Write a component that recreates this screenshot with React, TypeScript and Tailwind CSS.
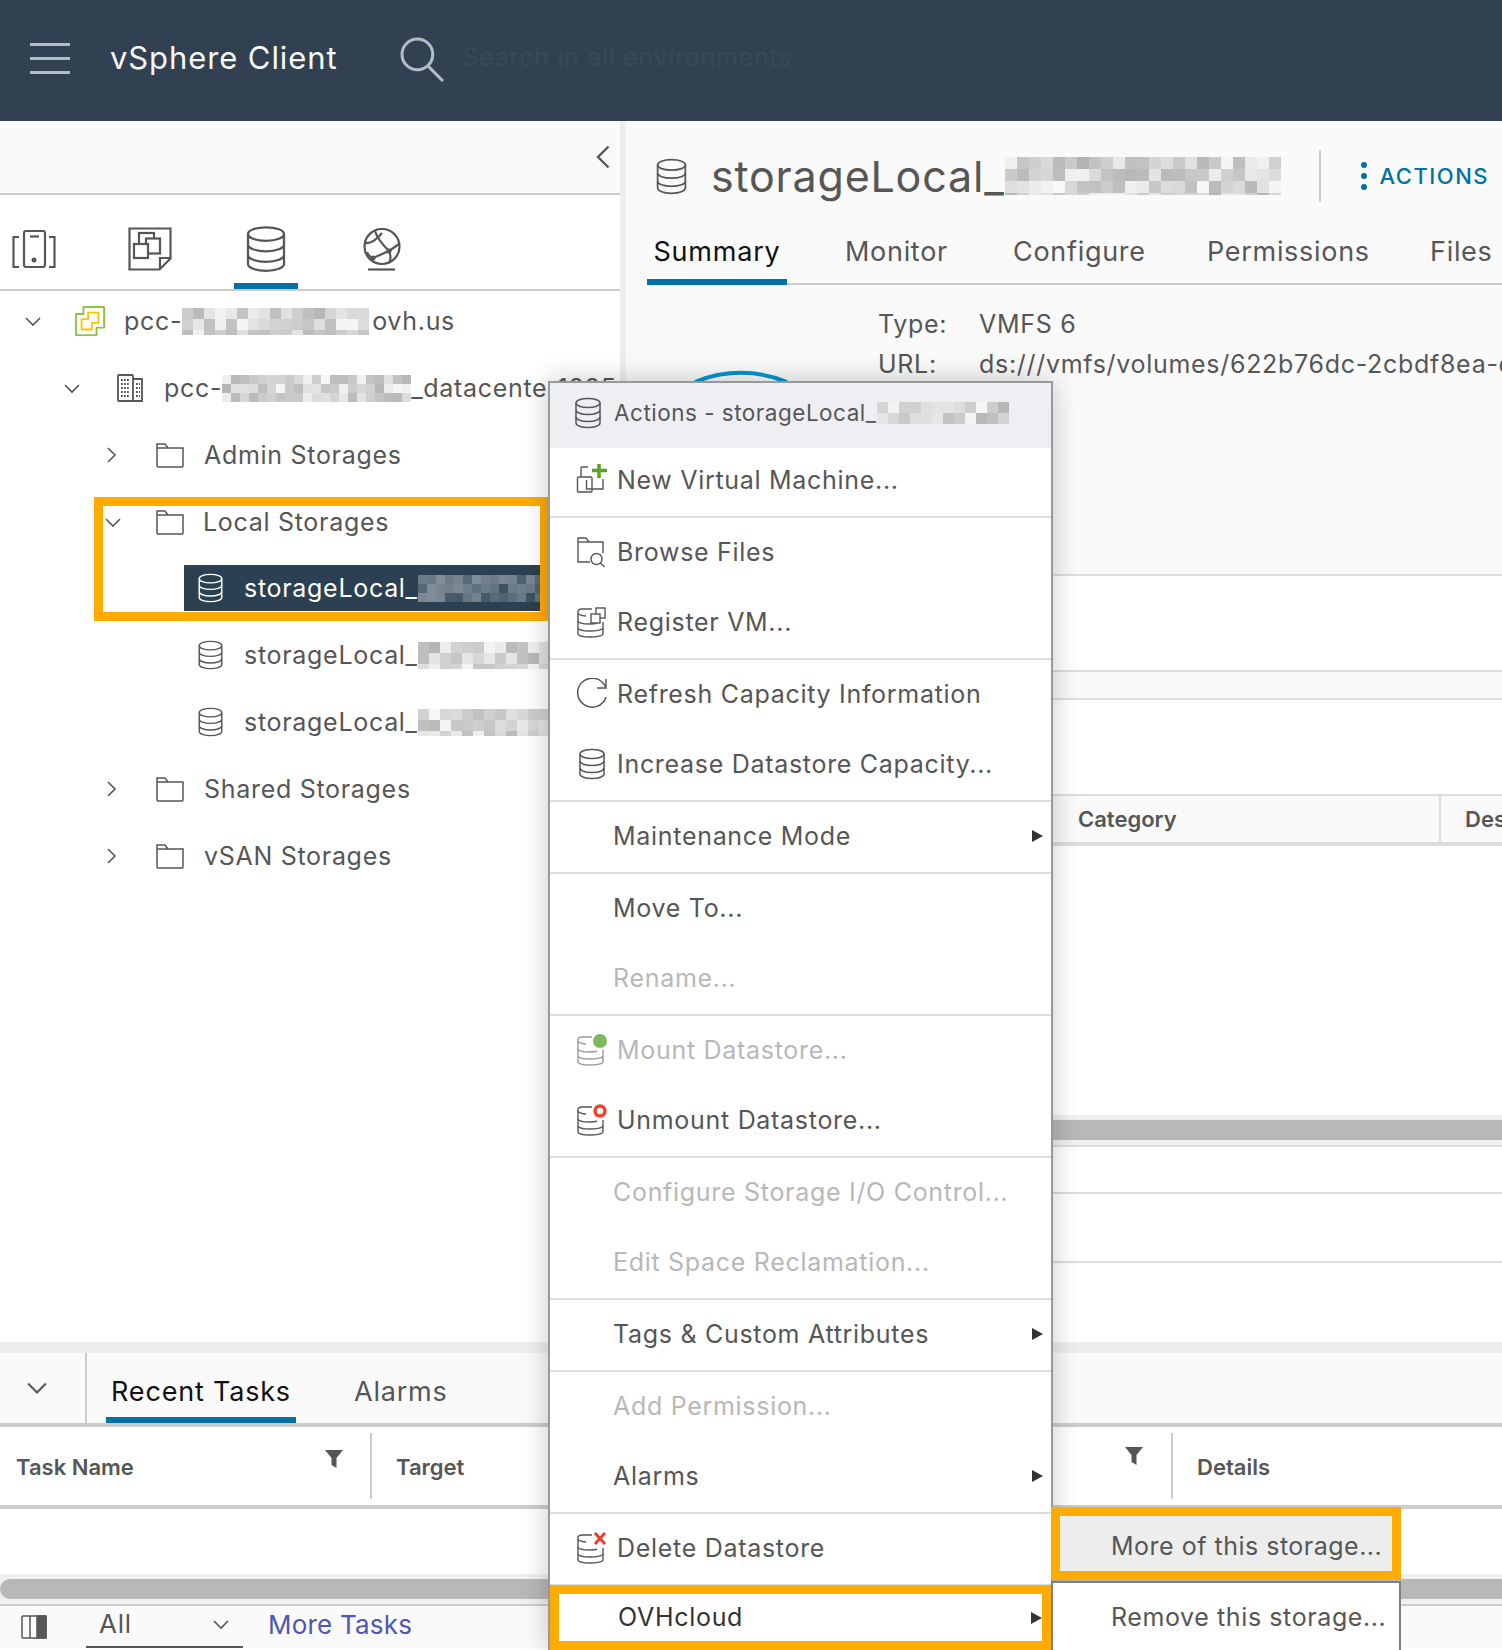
import type { ReactNode } from "react";

const stroke = "#565656";

// pixelated patch standing in for the blurred-out names
function Mosaic({ w, h, cell, seed, dark = false }: { w: number; h: number; cell: number; seed: number; dark?: boolean }) {
  const cols = Math.ceil(w / cell);
  const rows = Math.ceil(h / cell);
  let s = seed;
  const cells = [];
  for (let i = 0; i < cols * rows; i++) {
    s = (s * 9301 + 49297) % 233280;
    const r = s / 233280;
    const v = Math.round(248 - 68 * r);
    const color = dark ? `rgb(${60 + r * 70},${82 + r * 60},${98 + r * 55})` : `rgb(${v},${v},${v})`;
    cells.push(<span key={i} className="block" style={{ width: cell, height: cell, backgroundColor: color }} />);
  }
  return (
    <span className="flex flex-wrap overflow-hidden shrink-0" style={{ width: w, height: h }}>
      {cells}
    </span>
  );
}

function Chevron({ dir, className }: { dir: "down" | "right" | "left"; className?: string }) {
  const points = { down: "1,2 8,9 15,2", right: "5,1 12,8 5,15", left: "11,1 4,8 11,15" }[dir];
  const vb = dir === "down" ? "0 0 16 11" : "0 0 16 16";
  return (
    <svg viewBox={vb} className={className} fill="none" stroke={stroke} strokeWidth="1.6">
      <polyline points={points} />
    </svg>
  );
}

function Db({ className, color = stroke }: { className?: string; color?: string }) {
  return (
    <svg viewBox="0 0 28 32" className={className} fill="none" stroke={color} strokeWidth="1.5">
      <path d="M2 6c0-2.5 5-4.5 12-4.5S26 3.5 26 6v20c0 2.5-5 4.5-12 4.5S2 28.500 2 26z" />
      <path d="M2 6c0 2.500 5 4.500 12 4.500S26 8.500 26 6" />
      <path d="M2 13c0 2.500 5 4.500 12 4.500S26 15.500 26 13" />
      <path d="M2 20c0 2.500 5 4.500 12 4.500S26 22.500 26 20" />
    </svg>
  );
}

function Folder({ className }: { className?: string }) {
  return (
    <svg viewBox="0 0 28 26" className={className} fill="none" stroke={stroke} strokeWidth="1.5">
      <path d="M1 24V2h8l3 4h15v18a1 1 0 0 1-1 1H2a1 1 0 0 1-1-1z" />
      <path d="M1 6h11" />
    </svg>
  );
}

// database with notched corner, shared by the mount / unmount / delete items
function DbSmall({ color = stroke, children }: { color?: string; children?: ReactNode }) {
  return (
    <svg viewBox="0 0 32 32" className="w-[32px] h-[32px]" fill="none" stroke={color} strokeWidth="1.4">
      <path d="M16 3H6C3 3 2 4.500 2 6v22c0 1.500 5 3 12 3s13-1.500 13-3V16" />
      <path d="M2 7c0 1.500 3 2.500 8 3" />
      <path d="M2 15c0 1.500 4 3 12 3 3 0 5-.3 7-.8" />
      <path d="M2 22c0 1.500 5 3 12 3s13-1.500 13-3" />
      {children}
    </svg>
  );
}

function NewVmIcon() {
  return (
    <svg viewBox="0 0 32 32" className="w-[32px] h-[32px]" fill="none" stroke={stroke} strokeWidth="1.4">
      <path d="M5 13V4a1 1 0 0 1 1-1h6" />
      <rect x="1.500" y="13" width="14.500" height="15" rx="1" />
      <path d="M27 15v10H16M10.500 16v9H16" />
      <path d="M23 0v14M16 6.500h15" stroke="#5aa220" strokeWidth="3.500" />
    </svg>
  );
}

function BrowseIcon() {
  return (
    <svg viewBox="0 0 32 32" className="w-[32px] h-[32px]" fill="none" stroke={stroke} strokeWidth="1.4">
      <path d="M14 26H2V2h8l3 4h14v11" />
      <path d="M2 6h11" />
      <circle cx="20.500" cy="23" r="5.500" />
      <path d="M24.500 27l4 4" />
    </svg>
  );
}

function RegisterIcon() {
  return (
    <DbSmall>
      <rect x="20" y="2" width="9" height="10" fill="#fff" />
      <rect x="15" y="8" width="9" height="9" fill="#fff" />
    </DbSmall>
  );
}

function RefreshIcon() {
  return (
    <svg viewBox="0 0 32 32" className="w-[32px] h-[32px]" fill="none" stroke={stroke} strokeWidth="1.5">
      <path d="M29.500 9A14.500 14.500 0 1 0 30 19" />
      <path d="M30 1v9h-9" />
    </svg>
  );
}

function HostsIcon() {
  return (
    <svg viewBox="0 0 44 38" className="w-[44px] h-[38px]" fill="none" stroke={stroke} strokeWidth="2.2">
      <rect x="12" y="1" width="21" height="36" rx="2" />
      <path d="M18 6.500h9" />
      <circle cx="22" cy="30" r="2.500" fill={stroke} stroke="none" />
      <path d="M7 7H1.500v30H7M37 7h5.500v30H37" />
    </svg>
  );
}

function VmsIcon() {
  return (
    <svg viewBox="0 0 44 44" className="w-[44px] h-[44px]" fill="none" stroke={stroke} strokeWidth="2.2">
      <path d="M1.500 1.500h41v30L31.500 42.500H1.500z" />
      <path d="M42 31H32v11" />
      <rect x="11" y="6" width="15" height="12" />
      <rect x="18" y="11.500" width="14" height="15" fill="#fff" />
      <rect x="6" y="17" width="14" height="14" fill="#fff" />
    </svg>
  );
}

function GlobeIcon() {
  return (
    <svg viewBox="0 0 38 44" className="w-[38px] h-[44px]" fill="none" stroke={stroke} strokeWidth="2.2">
      <circle cx="19" cy="18.500" r="17.500" />
      <path d="M12 3c2 7 8 14 14 20l10-7" />
      <path d="M2 15c6 1 12-4 17-10" />
      <path d="M10 30l16-7c2 5 2 9 0 12" />
      <path d="M10 30c-3-1-5-3-6-6" />
      <circle cx="10" cy="30" r="2.500" fill={stroke} stroke="none" />
      <circle cx="26" cy="23" r="2.500" fill={stroke} stroke="none" />
      <path d="M5 41.500h27" />
    </svg>
  );
}

function Filter() {
  return (
    <svg viewBox="0 0 18 18" className="w-[18px] h-[18px]" fill={stroke}>
      <path d="M0 0h18l-6.500 8v10l-5-3V8z" />
    </svg>
  );
}

function VCenterIcon() {
  return (
    <svg viewBox="-1 -1 32 32" className="w-[30px] h-[30px]" fill="none" strokeWidth="2" strokeLinejoin="round">
      <path d="M8 7.500V0h22v22h-8v8H0V7.500z" stroke="#8cc63f" />
      <path d="M13 13V6h11v11h-7v7H6V13z" stroke="#fac400" />
    </svg>
  );
}

function DatacenterIcon() {
  return (
    <svg viewBox="0 0 26 28" className="w-[26px] h-[28px]" fill="none" stroke={stroke} strokeWidth="1.8">
      <rect x="1" y="1" width="15" height="26" rx="1" />
      <path d="M16 5h9v22h-9" />
      <path d="M4 6h9M4 10h9M4 14h9M4 18h9M4 22h9M19 10h4M19 14h4M19 18h4M19 22h4" strokeWidth="2" strokeDasharray="1.800 1.200" />
    </svg>
  );
}

type Item = { label: string; icon?: ReactNode; disabled?: boolean; arrow?: boolean };

const groups: Item[][] = [
  [{ label: "New Virtual Machine...", icon: <NewVmIcon /> }],
  [
    { label: "Browse Files", icon: <BrowseIcon /> },
    { label: "Register VM...", icon: <RegisterIcon /> },
  ],
  [
    { label: "Refresh Capacity Information", icon: <RefreshIcon /> },
    { label: "Increase Datastore Capacity...", icon: <Db className="w-[28px] h-[32px] ml-[2px]" /> },
  ],
  [{ label: "Maintenance Mode", arrow: true }],
  [{ label: "Move To..." }, { label: "Rename...", disabled: true }],
  [
    {
      label: "Mount Datastore...",
      disabled: true,
      icon: (
        <DbSmall color="#9a9a9a">
          <circle cx="24" cy="7" r="7" fill="#7fb85a" stroke="none" />
        </DbSmall>
      ),
    },
    {
      label: "Unmount Datastore...",
      icon: (
        <DbSmall>
          <circle cx="24" cy="7" r="5" fill="#fff" stroke="#f0442c" strokeWidth="3.500" />
        </DbSmall>
      ),
    },
  ],
  [
    { label: "Configure Storage I/O Control...", disabled: true },
    { label: "Edit Space Reclamation...", disabled: true },
  ],
  [{ label: "Tags & Custom Attributes", arrow: true }],
  [{ label: "Add Permission...", disabled: true }, { label: "Alarms", arrow: true }],
  [
    {
      label: "Delete Datastore",
      icon: (
        <DbSmall>
          <path d="M19 1l10 11M29 1L19 12" stroke="#e8402a" strokeWidth="3" />
        </DbSmall>
      ),
    },
  ],
];

function Arrow({ className = "mr-[8px]" }: { className?: string }) {
  return <span className={`ml-auto w-0 h-0 border-y-[6px] border-y-transparent border-l-[11px] border-l-[#333] ${className}`} />;
}

function MenuRow({ item }: { item: Item }) {
  return (
    <div className={`flex items-center h-[70px] pb-[2px] ${item.icon ? "pl-[26px]" : "pl-[63px]"}`}>
      {item.icon && <span className="w-[32px] mr-[9px] flex">{item.icon}</span>}
      <span className={item.disabled ? "text-[#b8b8b8]" : "text-[#565656]"}>{item.label}</span>
      {item.arrow && <Arrow />}
    </div>
  );
}

export default function App() {
  return (
    <div className="relative w-[1502px] h-[1650px] overflow-hidden bg-white font-[Inter,sans-serif] text-[25px] tracking-[0.7px] leading-none text-[#565656]">
      {/* Top bar */}
      <header className="flex items-center h-[121px] bg-[#314151] pb-[6px]">
        <div className="ml-[30px] w-[40px] flex flex-col gap-[11px] mt-[2px]">
          <span className="block h-[3px] bg-[#b5bcc3]" />
          <span className="block h-[3px] bg-[#b5bcc3]" />
          <span className="block h-[3px] bg-[#b5bcc3]" />
        </div>
        <span className="ml-[40px] text-[31px] tracking-[0.9px] text-[#f6f8f9]">vSphere Client</span>
        <svg viewBox="0 0 44 44" className="ml-[63px] mt-[3px] w-[45px] h-[45px]" fill="none" stroke="#b5bcc3" strokeWidth="3">
          <circle cx="17" cy="17" r="15" />
          <path d="M28 29l14 14" />
        </svg>
        <span className="ml-[17px] text-[#394958]">Search in all environments</span>
      </header>

      <div className="flex h-[1221px]">
        {/* Inventory tree */}
        <aside className="w-[620px] shrink-0 overflow-hidden">
          <div className="flex items-center justify-end h-[72px] bg-[#fafafa] border-b-2 border-[#ccc] pr-[4px] box-content">
            <Chevron dir="left" className="w-[24px] h-[24px]" />
          </div>
          <div className="flex items-center h-[96px] pl-[12px] border-b-2 border-[#ccc] box-border">
            <span className="mt-[14px]">
              <HostsIcon />
            </span>
            <span className="ml-[72px] mt-[14px]">
              <VmsIcon />
            </span>
            <span className="ml-[62px] w-[64px] h-full flex items-center justify-center border-b-[6px] border-[#0072a3] pt-[19px]">
              <Db className="w-[42px] h-[48px]" />
            </span>
            <span className="ml-[65px] mt-[16px]">
              <GlobeIcon />
            </span>
          </div>

          <div className="whitespace-nowrap">
            <div className="flex items-center h-[60px] mb-[7px] pl-[25px]">
              <Chevron dir="down" className="w-[16px] h-[11px]" />
              <span className="ml-[34px]">
                <VCenterIcon />
              </span>
              <span className="ml-[19px]">pcc-</span>
              <Mosaic w={190} h={27} cell={11} seed={11} />
              <span>ovh.us</span>
            </div>
            <div className="flex items-center h-[60px] mb-[7px] pl-[64px]">
              <Chevron dir="down" className="w-[16px] h-[11px]" />
              <span className="ml-[37px]">
                <DatacenterIcon />
              </span>
              <span className="ml-[21px]">pcc-</span>
              <Mosaic w={189} h={27} cell={9} seed={23} />
              <span>_datacenter1885</span>
            </div>
            <div className="flex items-center h-[60px] mb-[7px] pl-[103px]">
              <Chevron dir="right" className="w-[16px] h-[16px]" />
              <Folder className="ml-[37px] w-[28px] h-[26px]" />
              <span className="ml-[20px]">Admin Storages</span>
            </div>
            <div className="flex items-center h-[60px] mb-[6px] pl-[105px]">
              <Chevron dir="down" className="w-[16px] h-[11px]" />
              <Folder className="ml-[35px] w-[28px] h-[26px]" />
              <span className="ml-[19px]">Local Storages</span>
            </div>
            <div className="flex items-center h-[60px] mb-[7px] pl-[184px]">
              <div className="flex items-center h-[46px] w-full bg-[#2b4050] pl-[13px] text-white">
                <Db className="w-[27px] h-[30px]" color="#fff" />
                <span className="ml-[20px]">storageLocal_</span>
                <Mosaic w={135} h={27} cell={9} seed={37} dark />
              </div>
            </div>
            <div className="flex items-center h-[60px] mb-[7px] pl-[197px]">
              <Db className="w-[27px] h-[30px]" />
              <span className="ml-[20px]">storageLocal_</span>
              <Mosaic w={143} h={27} cell={11} seed={41} />
            </div>
            <div className="flex items-center h-[60px] mb-[7px] pl-[197px]">
              <Db className="w-[27px] h-[30px]" />
              <span className="ml-[20px]">storageLocal_</span>
              <Mosaic w={143} h={27} cell={11} seed={59} />
            </div>
            <div className="flex items-center h-[60px] mb-[7px] pl-[103px]">
              <Chevron dir="right" className="w-[16px] h-[16px]" />
              <Folder className="ml-[37px] w-[28px] h-[26px]" />
              <span className="ml-[20px]">Shared Storages</span>
            </div>
            <div className="flex items-center h-[60px] mb-[7px] pl-[103px]">
              <Chevron dir="right" className="w-[16px] h-[16px]" />
              <Folder className="ml-[37px] w-[28px] h-[26px]" />
              <span className="ml-[20px]">vSAN Storages</span>
            </div>
          </div>
        </aside>

        <div className="w-[6px] shrink-0 bg-[#eeeeee]" />

        {/* Datastore detail */}
        <main className="flex-1 min-w-0 overflow-hidden bg-[#fafafa] whitespace-nowrap">
          <div className="flex items-center h-[110px] pl-[29px]">
            <Db className="w-[33px] h-[37px] shrink-0" />
            <span className="ml-[23px] text-[43px] tracking-[0.8px]">storageLocal_</span>
            <Mosaic w={281} h={38} cell={12} seed={73} />
            <span className="ml-[33px] w-[2px] h-[52px] bg-[#ccc] shrink-0" />
            <span className="ml-[40px] flex flex-col gap-[5px]">
              <span className="block w-[6px] h-[6px] rounded-full bg-[#0072a3]" />
              <span className="block w-[6px] h-[6px] rounded-full bg-[#0072a3]" />
              <span className="block w-[6px] h-[6px] rounded-full bg-[#0072a3]" />
            </span>
            <span className="ml-[13px] text-[22px] font-medium tracking-[1.500px] text-[#0072a3]">ACTIONS</span>
          </div>
          <div className="flex h-[54px] ml-[21px] border-b-2 border-[#ccc]">
            <span className="w-[140px] h-[54px] flex justify-center pt-[7px] border-b-[6px] border-[#0072a3] text-[#111] text-[27px] tracking-[0.8px]">Summary</span>
            <div className="flex pl-[58px] pt-[7px] text-[27px] tracking-[0.7px]">
              <span className="w-[168px]">Monitor</span>
              <span className="w-[194px]">Configure</span>
              <span className="w-[223px]">Permissions</span>
              <span>Files</span>
            </div>
          </div>
          <div className="flex h-[289px] pl-[67px]">
            <svg viewBox="0 0 96 12" className="w-[96px] h-[12px] mt-[85px] shrink-0" fill="none" stroke="#0095d3" strokeWidth="4">
              <path d="M2 12A120 120 0 0 1 94 12" />
            </svg>
            <div className="ml-[89px] pt-[27px]">
              <div className="flex h-[24px] items-center">
                <span className="w-[101px] shrink-0">Type:</span>
                <span>VMFS 6</span>
              </div>
              <div className="flex h-[24px] items-center mt-[16px]">
                <span className="w-[101px] shrink-0">URL:</span>
                <span>ds:///vmfs/volumes/622b76dc-2cbdf8ea-e89b-0015</span>
              </div>
            </div>
          </div>
          <div className="h-[98px] bg-white border-t-2 border-[#ddd] border-b-2" />
          <div className="h-[26px]" />
          <div className="h-[98px] bg-white border-y-2 border-[#ddd]" />
          <div className="flex items-center h-[50px] bg-[#fafafa] border-b-4 border-[#ddd] font-semibold text-[22px] tracking-normal pl-[452px]">
            <span className="w-[361px] shrink-0">Category</span>
            <span className="flex items-center h-full border-l-2 border-[#ddd] pl-[24px]">Description</span>
          </div>
          <div className="h-[269px] bg-white" />
          <div className="flex items-center h-[32px] bg-[#f0f0f0] border-b-2 border-[#ddd]">
            <div className="w-full h-[20px] bg-[#b8b8b8]" />
          </div>
          <div className="h-[47px] bg-white border-b-2 border-[#ddd]" />
          <div className="h-[69px] bg-white border-b-2 border-[#ddd]" />
          <div className="h-[79px] bg-white" />
        </main>
      </div>

      {/* Recent tasks */}
      <div className="h-[11px] bg-[#eeeeee]" />
      <section className="whitespace-nowrap">
        <div className="flex h-[74px] bg-[#fafafa] border-b-4 border-[#ccc] text-[27px] tracking-[0.8px]">
          <div className="flex items-center justify-center w-[85px] h-[70px] border-r-2 border-[#ccc] box-content pr-0">
            <Chevron dir="down" className="w-[22px] h-[14px] mr-[12px]" />
          </div>
          <span className="ml-[19px] w-[190px] h-[70px] flex justify-center pt-[25px] border-b-[6px] border-[#0072a3] text-[#111]">Recent Tasks</span>
          <span className="ml-[58px] pt-[25px]">Alarms</span>
        </div>
        <div className="flex items-center h-[78px] border-b-4 border-[#ccc] box-content font-semibold text-[22px] tracking-normal">
          <div className="flex justify-between w-[370px] pl-[16px] pr-[27px]">
            <span className="mt-[2px]">Task Name</span>
            <span className="-mt-[4px]">
              <Filter />
            </span>
          </div>
          <div className="flex justify-between items-center w-[801px] h-[66px] border-l-2 border-[#ccc] pl-[24px] pr-[28px]">
            <span className="mt-[2px]">Target</span>
            <span className="-mt-[21px]">
              <Filter />
            </span>
          </div>
          <div className="flex items-center h-[66px] border-l-2 border-[#ccc] pl-[24px]">
            <span className="mt-[2px]">Details</span>
          </div>
        </div>
        <div className="h-[65px]" />
        <div className="flex items-center h-[32px] bg-[#f0f0f0] border-b-2 border-[#ccc]">
          <div className="w-full h-[20px] rounded-l-[10px] bg-[#b8b8b8]" />
        </div>
        <div className="flex items-center h-[42px] bg-[#fafafa] text-[26px]">
          <svg viewBox="0 0 26 24" className="ml-[21px] w-[26px] h-[24px]" fill="none" stroke={stroke} strokeWidth="1.500">
            <rect x="1" y="1" width="24" height="22" rx="1" />
            <path d="M9 1v22" />
            <rect x="16" y="1" width="9" height="22" fill={stroke} />
          </svg>
          <div className="flex items-center ml-[39px] w-[157px] h-full border-b-2 border-[#565656] pl-[13px] pr-[14px] justify-between">
            <span className="-mt-[4px]">All</span>
            <Chevron dir="down" className="w-[16px] h-[11px] -mt-[4px]" />
          </div>
          <span className="ml-[25px] -mt-[4px] tracking-[0.2px] text-[#4f56b5]">More Tasks</span>
        </div>
      </section>

      {/* Callout around the selected folder */}
      <div className="absolute left-[94px] top-[497px] w-[455px] h-[124px] border-[9px] border-[#ffab00] z-10" />

      {/* Actions menu */}
      <div className="absolute left-[548px] top-[381px] w-[505px] h-[1269px] bg-white border-2 border-[#999] border-b-0 shadow-[0_0_26px_rgba(0,0,0,0.22)] whitespace-nowrap z-20">
        <div className="flex items-center h-[65px] -mb-[2px] bg-[#eeeff3] pl-[24px] pb-[5px] text-[22.500px] tracking-[0.5px]">
          <Db className="w-[28px] h-[32px]" />
          <span className="ml-[12px]">Actions - storageLocal_</span>
          <Mosaic w={142} h={22} cell={11} seed={83} />
        </div>
        {groups.map((group, i) => (
          <div key={i} className="border-b-2 border-[#ddd] box-content">
            {group.map((item) => (
              <MenuRow key={item.label} item={item} />
            ))}
          </div>
        ))}
        <div className="flex items-center h-[65px] border-[9px] border-[#ffab00] pl-[59px] text-[#333] -mt-[1px]">
          <span>OVHcloud</span>
          <Arrow className="mr-0" />
        </div>
      </div>

      {/* OVHcloud submenu */}
      <div className="absolute left-[1051px] top-[1507px] w-[350px] h-[143px] whitespace-nowrap z-30">
        <div className="flex items-center h-[73px] bg-[#ededed] border-[9px] border-[#ffab00] pl-[51px] pt-[5px] tracking-[0.5px]">More of this storage...</div>
        <div className="flex items-center h-[70px] bg-white mt-[1px] border-t-2 border-x-2 border-[#808080] pl-[58px] tracking-[0.6px]">Remove this storage...</div>
      </div>
    </div>
  );
}
